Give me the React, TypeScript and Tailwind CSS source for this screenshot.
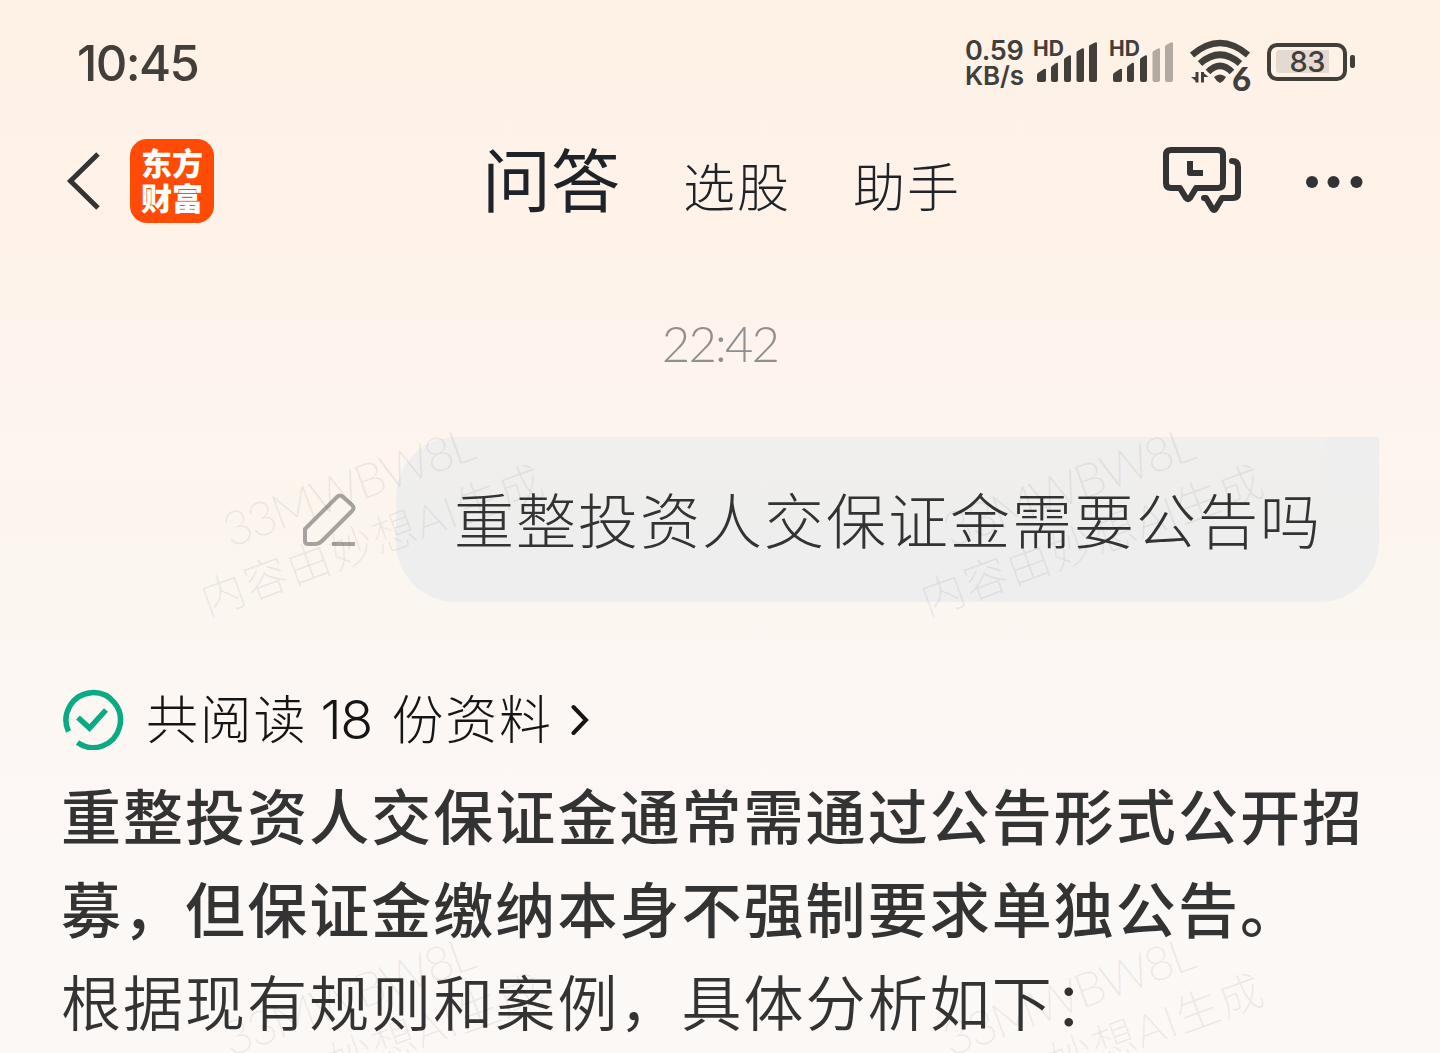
import type { ReactNode } from "react";

function SignalBars({ strength }: { strength: number }) {
  const bars = [
    "M0 38v-5q0-1 1-2l6-4q2-1 2 1v10q0 2-2 2H2q-2 0-2-2z",
    "M14 38V26q0-1.500 1-2l4-3q2-1 2 1v16q0 2-2 2h-3q-2 0-2-2z",
    "M27 38V18q0-1.500 1-2l4-2.500q2-1 2 1V38q0 2-2 2h-3q-2 0-2-2z",
    "M39.500 38V11q0-1.500 1-2l4.500-2.500q2-1 2 1V38q0 2-2 2h-3.500q-2 0-2-2z",
    "M52 38V5q0-1.500 1-2l5-2.500q2-1 2 1V38q0 2-2 2h-4q-2 0-2-2z",
  ];
  return (
    <div className="relative h-[42px] w-[63px]">
      <span className="absolute -left-[4px] -top-[2px] font-['Inter',sans-serif] text-[21px] leading-[20px] font-bold">
        HD
      </span>
      <svg viewBox="0 0 60 40" className="absolute left-0 top-[1px] h-[40px] w-[60px]" fill="currentColor">
        {bars.map((d, i) => (
          <path key={d} d={d} opacity={i < strength ? 1 : 0.4} />
        ))}
      </svg>
    </div>
  );
}

function WifiIcon() {
  return (
    <div className="relative h-[54px] w-[64px]">
      <svg viewBox="0 0 64 54" className="h-[54px] w-[64px]" fill="none" stroke="currentColor">
        <path d="M2 16Q30-8 58 16" strokeWidth="6.500" />
        <path d="M10 24.500Q30 7 50 24.500" strokeWidth="6.500" />
        <path d="M18 33Q30 21 42 33" strokeWidth="6.500" />
        <path d="M24 38Q30 33 36 38Q34 42 30 44Q26 42 24 38z" fill="currentColor" stroke="none" />
        <path d="M7 33v10.500M12.500 33v10.500" strokeWidth="3" />
        <path d="M1 38h6v5zM12.500 33l6 5h-6z" fill="currentColor" stroke="none" />
      </svg>
      <span className="absolute left-[42px] top-[23px] font-['Lato',sans-serif] text-[33px] leading-[33px] font-black">
        6
      </span>
    </div>
  );
}

function Battery() {
  return (
    <div className="flex items-center gap-[3px]">
      <div className="flex h-[38px] w-[80px] items-center rounded-[10px] border-4 border-[#423e3a] pl-[5px]">
        <div className="flex h-[23px] w-[53px] items-center justify-end rounded-l-[4px] bg-[#e4dad2] pr-[4px] font-['Inter',sans-serif] text-[29px] leading-[23px] font-medium tracking-[-0.500px]">
          83
        </div>
      </div>
      <div className="h-[13px] w-[5px] rounded-[2px] bg-[#423e3a]" />
    </div>
  );
}

function StatusBar() {
  return (
    <div className="flex h-[123px] items-center pl-[77px] pr-[85px] text-[#423e3a]">
      <span className="mt-[3px] font-['Inter',sans-serif] text-[49px] leading-none font-medium tracking-[-1.600px]">
        10:45
      </span>
      <div className="ml-auto flex items-center">
        <div className="mt-[2px] mr-[10px] w-[62px] font-['Inter',sans-serif] text-[27px] leading-[25px] font-semibold whitespace-nowrap">
          <div className="tracking-[-0.300px]">0.59</div>
          <div className="text-[26px] tracking-[-0.200px]">KB/s</div>
        </div>
        <div className="mr-[13px]">
          <SignalBars strength={5} />
        </div>
        <div className="mr-[14px]">
          <SignalBars strength={3} />
        </div>
        <div className="mr-[13px] mt-[8px]">
          <WifiIcon />
        </div>
        <Battery />
      </div>
    </div>
  );
}

function AppLogo() {
  return (
    <div className="flex size-[84px] flex-col items-center justify-center rounded-[17px] bg-[#ff4b05] pb-[4px] text-[31px] leading-[35px] font-black text-white">
      <span>东方</span>
      <span>财富</span>
    </div>
  );
}

function NavBar() {
  return (
    <div className="flex h-[116px] items-center pl-[66px] pr-[77px] text-[#333]">
      <svg viewBox="0 0 34 58" className="h-[58px] w-[34px]" fill="none" stroke="currentColor" strokeWidth="5">
        <path d="M32 2L4.500 29L32 56" />
      </svg>
      <div className="ml-[30px]">
        <AppLogo />
      </div>
      <div className="ml-[268px] flex items-baseline text-[#1f2226]">
        <span className="w-[201px] text-[69px] leading-[100px]">问答</span>
        <span className="w-[170px] text-[52px] leading-[100px] font-light tracking-[2px]">选股</span>
        <span className="w-[110px] text-[52px] leading-[100px] font-light tracking-[2px]">助手</span>
      </div>
      <svg
        viewBox="0 0 80 68"
        className="-mt-[4px] ml-auto h-[68px] w-[80px]"
        fill="none"
        stroke="currentColor"
        strokeWidth="6"
        strokeLinecap="round"
        strokeLinejoin="round"
      >
        <path d="M9 5H56Q61 5 61 10V38Q61 43 56 43H34L28 53Q26 55.500 24 53L18 43H9Q4 43 4 38V10Q4 5 9 5Z" />
        <path d="M70 16Q76 16 76 22V48Q76 53 71 53H60L53.500 64Q52 66 50.500 64L44 53H42" />
        <path d="M28 16V28H41" strokeLinecap="butt" />
      </svg>
      <svg viewBox="0 0 58 14" className="mt-[2px] ml-[63px] h-[14px] w-[58px]" fill="currentColor">
        <circle cx="7" cy="7" r="6" />
        <circle cx="28.500" cy="7" r="6" />
        <circle cx="51.500" cy="7" r="6" />
      </svg>
    </div>
  );
}

function UserMessage({ children }: { children: ReactNode }) {
  return (
    <div className="mt-[54px] flex items-center pl-[302px]">
      <svg
        viewBox="0 0 56 56"
        className="mr-[38px] h-[56px] w-[56px]"
        fill="none"
        stroke="#a7a29e"
        strokeWidth="4"
        strokeLinejoin="round"
      >
        <path d="M3 37L35 5Q38 2 41 5L50 13Q53 16 50 19L20 49Q17 52 14 52H6Q3 52 3 49Z" />
        <path d="M30 52H53" />
      </svg>
      <div className="relative h-[165px] w-[983px] rounded-[60px] rounded-tr-none bg-linear-to-b from-[#f0efed] to-[#eeeeee] to-60% pl-[58px] text-[60px] leading-[161px] font-light tracking-[2px] whitespace-nowrap text-[#333]">
        <div className="absolute top-0 right-0 size-[54px] bg-[#eeeeee]" />
        {children}
      </div>
    </div>
  );
}

function SourcesRow() {
  return (
    <div className="mt-[78px] flex h-[80px] items-center pl-[63px] text-[#151515]">
      <svg viewBox="0 0 62 62" className="-mt-[2px] h-[62px] w-[62px]" fill="none" stroke="#0aaa82" strokeWidth="5.500">
        <path d="M5.500 43.500A27.200 27.500 0 1 1 14.500 54.500" />
        <path d="M15 29.500L26.500 40L43 22" strokeWidth="5.500" />
      </svg>
      <span className="-mt-[6px] ml-[21px] text-[52px] font-light tracking-[1.800px]">共阅读</span>
      <span className="ml-[13px] w-[71px] font-['Inter',sans-serif] text-[54px] leading-none font-light tracking-[-1.500px]">
        18
      </span>
      <span className="-mt-[6px] text-[52px] font-light tracking-[1.800px]">份资料</span>
      <svg
        viewBox="0 0 18 32"
        className="ml-[18px] h-[32px] w-[18px]"
        fill="none"
        stroke="currentColor"
        strokeWidth="4"
        strokeLinecap="round"
      >
        <path d="M2.500 3L15 16L2.500 29" />
      </svg>
    </div>
  );
}

function Watermark({ className }: { className: string }) {
  return (
    <div
      className={`absolute flex w-[400px] -rotate-[20deg] flex-col items-center font-['Lato','Noto_Sans_CJK_SC',sans-serif] font-light whitespace-nowrap text-black/[0.060] ${className}`}
    >
      <span className="mr-[10px] text-[48px] leading-[58px] tracking-[-2.200px]">33MWBW8L</span>
      <span className="text-[44px] leading-[58px] tracking-[1.500px]">内容由妙想AI生成</span>
    </div>
  );
}

export default function App() {
  return (
    <div className="relative h-[1053px] w-[1440px] overflow-hidden bg-[linear-gradient(to_bottom,#fef2e7_0%,#fef3ea_25%,#fef4ee_36%,#fbf6ef_56%,#fcf7f3_66%,#fcf8f6_82%)] font-['Noto_Sans_CJK_SC',sans-serif]">
      <StatusBar />
      <NavBar />
      <div className="mt-[64px] h-[80px] text-center font-['Lato',sans-serif] text-[49px] leading-[80px] font-light tracking-[-1.800px] text-[#8f8f8f]">
        22:42
      </div>
      <UserMessage>重整投资人交保证金需要公告吗</UserMessage>
      <SourcesRow />
      <div className="mt-[7px] pl-[61px] text-[60px] leading-[93px] tracking-[2.050px] whitespace-nowrap text-[#333]">
        <p className="font-medium">重整投资人交保证金通常需通过公告形式公开招</p>
        <p className="font-medium">募，但保证金缴纳本身不强制要求单独公告。</p>
        <p className="font-[350]">根据现有规则和案例，具体分析如下：</p>
      </div>
      <Watermark className="left-[162px] top-[454px]" />
      <Watermark className="left-[882px] top-[454px]" />
      <Watermark className="left-[162px] top-[963px]" />
      <Watermark className="left-[882px] top-[963px]" />
    </div>
  );
}
